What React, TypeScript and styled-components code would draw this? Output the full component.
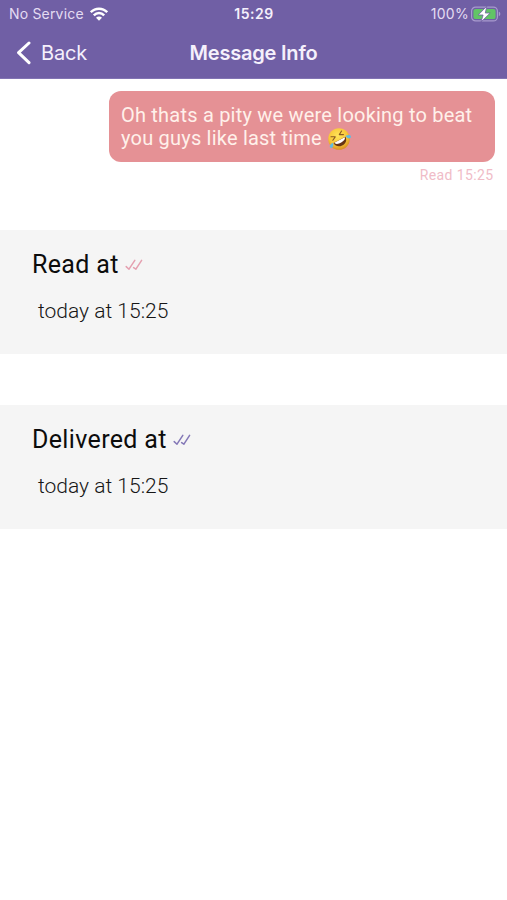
import React from "react";
import styled, { createGlobalStyle } from "styled-components";

const GlobalStyle = createGlobalStyle`
  * { box-sizing: border-box; }
  body { margin: 0; background: #fff; }
`;

const Screen = styled.main`
  width: 507px;
  height: 900px;
  overflow: hidden;
  background: #fff;
  font-family: Roboto, sans-serif;
`;

const Header = styled.header`
  height: 79px;
  background: #705fa5;
  border-bottom: 1px solid #8274b3;
  color: #f5f0fc;
  font-family: Inter, sans-serif;
`;

const StatusBar = styled.div`
  display: grid;
  grid-template-columns: 1fr auto 1fr;
  height: 27px;
  padding: 0 6px 0 9px;
  align-items: center;
  font-size: 14px;
  line-height: 27px;
`;

const Carrier = styled.div`
  display: flex;
  align-items: center;
  gap: 6px;
  letter-spacing: 0.18px;
  color: #e4dcf2;
`;

const Clock = styled.div`
  padding-right: 2px;
  font-weight: 600;
  letter-spacing: 0.5px;
`;

const Power = styled.div`
  display: flex;
  justify-content: flex-end;
  align-items: center;
  gap: 2px;
  letter-spacing: 0.3px;
  color: #e4dcf2;
`;

const NavBar = styled.nav`
  display: grid;
  grid-template-columns: 1fr auto 1fr;
  height: 51px;
  padding: 0 16px;
  align-items: center;
`;

const BackButton = styled.button`
  display: flex;
  align-items: center;
  gap: 9px;
  padding: 0;
  border: 0;
  background: none;
  color: inherit;
  font: 400 20px/24px Inter, sans-serif;
  letter-spacing: -0.2px;
`;

const Title = styled.h1`
  margin: 0;
  font-size: 20px;
  font-weight: 600;
  line-height: 24px;
  letter-spacing: -0.2px;
`;

const Message = styled.section`
  display: flex;
  flex-direction: column;
  align-items: flex-end;
  height: 151px;
  padding: 12px 12.5px 0 0;
`;

const Bubble = styled.div`
  width: 385.5px;
  height: 71px;
  padding: 13px 12px;
  border-radius: 12px;
  background: #e59195;
  color: #fff0ea;
  font-size: 20px;
  line-height: 23px;
`;

const Line = styled.div`
  display: flex;
  align-items: center;
  height: 23px;
  white-space: pre;
  letter-spacing: 0.21px;
`;

const Receipt = styled.div`
  margin: 4px 1px 0 0;
  color: #f0bcc7;
  font-size: 14px;
  line-height: 18px;
  letter-spacing: 0.38px;
`;

const Panel = styled.section`
  height: 124px;
  margin-bottom: 51px;
  padding: 20px 32px 0;
  background: #f5f5f5;
`;

const PanelTitle = styled.h2`
  display: flex;
  align-items: center;
  gap: 6px;
  margin: 0;
  color: #0c0c0c;
  font-size: 25px;
  font-weight: 400;
  line-height: 30px;
  letter-spacing: 0.35px;
`;

const PanelTime = styled.p`
  margin: 18px 0 0 6px;
  color: #161616;
  font-size: 21px;
  font-weight: 300;
  line-height: 26px;
`;

const WifiIcon = () => (
  <svg width="18" height="14" viewBox="0 0 18 14" fill="none" stroke="#fff" strokeWidth="2.5">
    <path d="M.8 5.2C5.3.5 12.7.5 17.2 5.2" />
    <path d="M3.8 8.3C6.8 5.3 11.2 5.3 14.2 8.3" />
    <path d="M9 13.7 6 10.7C7.6 9.1 10.4 9.1 12 10.7Z" fill="#fff" stroke="none" />
  </svg>
);

const BatteryIcon = () => (
  <svg width="30" height="18" viewBox="0 0 30 18">
    <rect x=".6" y="2.1" width="25.8" height="13.8" rx="4" fill="none" stroke="#a89bce" strokeWidth="1.2" />
    <rect x="2.4" y="3.9" width="22.2" height="10.2" rx="2.2" fill="#62c466" />
    <path d="M27.8 6.8c2 .6 2 3.8 0 4.4Z" fill="#a89bce" />
    <path d="M15.8 1.2 7.2 10h4.9L10 17l9.2-9h-4.9Z" fill="#fff" stroke="#705fa5" strokeWidth=".8" />
  </svg>
);

const BackIcon = () => (
  <svg width="16" height="24" viewBox="0 0 16 24" fill="none" stroke="#fff" strokeWidth="3" strokeLinecap="round" strokeLinejoin="round">
    <path d="M13 2 2.6 11.7l10.4 10" />
  </svg>
);

const Ticks = ({ color }: { color: string }) => (
  <svg width="18" height="14" viewBox="0 0 18 14" fill="none" stroke={color} strokeWidth="1.5" strokeLinecap="round" strokeLinejoin="round">
    <path d="M1.2 8.6 4 11.2 9.8 2.4M8.6 9.6 10.9 11.2 16.6 2.4" />
  </svg>
);

const LaughIcon = () => (
  <svg width="24" height="24" viewBox="0 0 24 24" role="img" aria-label="Rolling on the floor laughing">
    <defs>
      <radialGradient id="face" cx=".45" cy=".35" r=".65">
        <stop offset="0" stopColor="#ffe45a" />
        <stop offset=".65" stopColor="#f8c638" />
        <stop offset="1" stopColor="#d99024" />
      </radialGradient>
    </defs>
    <circle cx="12" cy="12" r="10.8" fill="url(#face)" />
    <g transform="rotate(-28 12 12)">
      <path d="M5.2 13h13.6c0 8.3-13.6 8.3-13.6 0Z" fill="#673415" />
      <path d="M6.1 13.2h11.8c-.2 4-11.6 4-11.8 0Z" fill="#fff" />
      <path d="m6 6.2 3.7 2.1L6 10.2M18 6.2l-3.7 2.1 3.7 1.9" fill="none" stroke="#8b5a22" strokeWidth="1.1" strokeLinecap="round" strokeLinejoin="round" />
      <path d="M4.9 12.4C2.2 12.2-.1 13.6.2 15.2c.6 2.4 4.3 1.2 4.7-2.8Z" fill="#62bbdf" />
      <path d="M19.1 12.4c2.7-.2 5 1.2 4.7 2.8-.6 2.4-4.3 1.2-4.7-2.8Z" fill="#62bbdf" />
    </g>
  </svg>
);

const receipts = [
  { label: "Read at", color: "#e5a0b0" },
  { label: "Delivered at", color: "#8478b7" },
];

export default function App() {
  return (
    <Screen>
      <GlobalStyle />
      <Header>
        <StatusBar>
          <Carrier>No Service<WifiIcon /></Carrier>
          <Clock>15:29</Clock>
          <Power>100%<BatteryIcon /></Power>
        </StatusBar>
        <NavBar>
          <BackButton><BackIcon />Back</BackButton>
          <Title>Message Info</Title>
        </NavBar>
      </Header>
      <Message>
        <Bubble>
          <Line>Oh thats a pity we were looking to beat</Line>
          <Line>you guys like last time <LaughIcon /></Line>
        </Bubble>
        <Receipt>Read 15:25</Receipt>
      </Message>
      {receipts.map((r) => (
        <Panel key={r.label}>
          <PanelTitle>{r.label}<Ticks color={r.color} /></PanelTitle>
          <PanelTime>today at 15:25</PanelTime>
        </Panel>
      ))}
    </Screen>
  );
}
